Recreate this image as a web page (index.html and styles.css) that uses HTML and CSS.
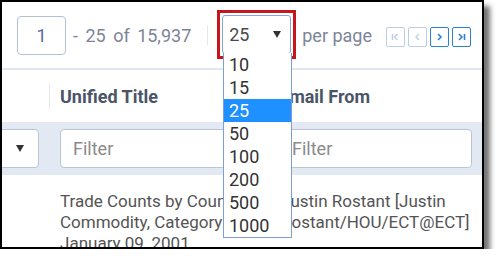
FILE: index.html
```html
<!DOCTYPE html>
<html lang="en">
<head>
  <meta charset="UTF-8" />
  <meta name="viewport" content="width=device-width, initial-scale=1.0" />
  <title>Documents grid</title>
  <link rel="stylesheet" href="styles.css">
</head>
<body>
  <div class="frame">
    <div class="toolbar">
      <div class="page-input">1</div>
      <div class="range">- 25 of 15,937</div>
      <div class="divider"></div>
      <div class="size-wrap">
        <div class="size-select">
          <span>25</span>
          <svg width="8" height="7" viewBox="0 0 8 7"><path d="M0 0 H8 L4 7 Z" fill="#333"/></svg>
        </div>
      </div>
      <div class="per-page">per page</div>
      <div class="pager">
        <button class="pg off">
          <svg width="19" height="20" viewBox="0 0 19 20"><path d="M6.5 7 V13 M11.5 7 L8.5 10 L11.5 13" fill="none" stroke="currentColor" stroke-width="1.4"/></svg>
        </button>
        <button class="pg off">
          <svg width="19" height="20" viewBox="0 0 19 20"><path d="M11 7 L8 10 L11 13" fill="none" stroke="currentColor" stroke-width="1.4"/></svg>
        </button>
        <button class="pg">
          <svg width="19" height="20" viewBox="0 0 19 20"><path d="M8 7 L11 10 L8 13" fill="none" stroke="currentColor" stroke-width="1.6"/></svg>
        </button>
        <button class="pg">
          <svg width="19" height="20" viewBox="0 0 19 20"><path d="M7 7 L10 10 L7 13 M12.5 7 V13" fill="none" stroke="currentColor" stroke-width="1.6"/></svg>
        </button>
      </div>
    </div>

    <div class="head-row">
      <div class="th col1"></div>
      <div class="th col2">Unified Title</div>
      <div class="th col3">Email From</div>
    </div>

    <div class="filter-row">
      <div class="col1">
        <div class="filter-select">
          <svg width="8" height="7" viewBox="0 0 8 7"><path d="M0 0 H8 L4 7 Z" fill="#333"/></svg>
        </div>
      </div>
      <div class="col2"><div class="filter-input">Filter</div></div>
      <div class="col3"><div class="filter-input">Filter</div></div>
    </div>

    <div class="data-row">
      <div class="col1"></div>
      <div class="td col2">Trade Counts by Counterparty,<br>Commodity, Category<br>January 09, 2001</div>
      <div class="td col3">Justin Rostant [Justin Rostant/HOU/ECT@ECT]</div>
    </div>

    <ul class="size-list">
      <li>10</li>
      <li>15</li>
      <li class="active">25</li>
      <li>50</li>
      <li>100</li>
      <li>200</li>
      <li>500</li>
      <li>1000</li>
    </ul>
  </div>
</body>
</html>
```

FILE: styles.css
```css
body {
  margin: 0;
  background-color: #fff;
  font-family: Roboto, "Liberation Sans", sans-serif;
}

.frame {
  position: relative;
  width: 484px;
  height: 249px;
  box-sizing: border-box;
  border: 2px solid #000;
  background-color: #fff;
  overflow: hidden;
  box-shadow: 6px 6px 5px rgba(0, 0, 0, 0.55);
}

/* top paging bar */
.toolbar {
  display: flex;
  align-items: center;
  height: 66px;
  padding: 0 11px 0 15px;
  border-bottom: 2px solid #dfe7f1;
}

.page-input {
  width: 49px;
  height: 39px;
  box-sizing: border-box;
  border: 1px solid #b3c0d6;
  border-radius: 4px;
  text-align: center;
  line-height: 37px;
  font-size: 18px;
  color: #5a6d9c;
}

.range {
  margin-left: 7px;
  font-size: 18px;
  word-spacing: 3px;
  color: #7d8597;
}

.divider {
  width: 1px;
  height: 20px;
  background-color: #e4e7eb;
  margin: 0 9px 0 16px;
}

.size-wrap {
  padding: 2px;
  border: 3px solid #c4161c;
  margin-top: -2px;
}

.size-select {
  display: flex;
  align-items: center;
  justify-content: space-between;
  width: 69px;
  height: 39px;
  box-sizing: border-box;
  padding: 0 9px 0 6px;
  border: 1px solid #86a6e0;
  border-radius: 3px;
  font-size: 18px;
  color: #4a4a4a;
}

.per-page {
  margin-left: 6px;
  font-size: 18px;
  color: #7d8597;
}

.pager {
  display: flex;
  gap: 3px;
  margin-left: auto;
  margin-top: 4px;
}

.pg {
  width: 19px;
  height: 20px;
  padding: 0;
  border: 1px solid #2d80d8;
  border-radius: 2px;
  background: #fff;
  color: #2d80d8;
  display: flex;
  align-items: center;
  justify-content: center;
}

.pg svg {
  display: block;
  margin: -1px;
}

.pg.off {
  border-color: #bccde5;
  color: #bccde5;
}

/* grid columns */
.col1 {
  width: 47px;
  flex: none;
}

.col2 {
  width: 219px;
  flex: none;
}

.col3 {
  flex: 1;
}

.head-row {
  display: flex;
  align-items: center;
  height: 52px;
}

.th {
  height: 25px;
  line-height: 25px;
  font-size: 18px;
  font-weight: bold;
  color: #4a5567;
  white-space: nowrap;
}

.th.col2,
.th.col3 {
  border-left: 1px solid #e4e7eb;
  padding-left: 10px;
  box-sizing: border-box;
}

.filter-row {
  display: flex;
  align-items: center;
  height: 53px;
  background-color: #e2e9f3;
}

.filter-select {
  display: flex;
  align-items: center;
  justify-content: flex-end;
  width: 60px;
  height: 39px;
  box-sizing: border-box;
  margin-left: -23px;
  padding-right: 14px;
  border: 1px solid #b9c5d7;
  border-radius: 4px;
  background-color: #fff;
}

.filter-input {
  height: 39px;
  box-sizing: border-box;
  margin: 0 10px 0 11px;
  padding-left: 12px;
  border: 1px solid #b9c5d7;
  border-radius: 4px;
  background-color: #fff;
  line-height: 37px;
  font-size: 18px;
  color: #8a8a8a;
}

.data-row {
  display: flex;
  padding-top: 16px;
}

.td {
  font-size: 17px;
  line-height: 21px;
  color: #545454;
}

.td.col2 {
  padding-left: 11px;
  box-sizing: border-box;
  white-space: nowrap;
}

.td.col3 {
  padding-left: 13px;
}

/* open page-size list */
.size-list {
  position: absolute;
  left: 221px;
  top: 51px;
  width: 69px;
  margin: 0;
  padding: 0;
  list-style: none;
  box-sizing: border-box;
  border: 1px solid #7f9fd3;
  border-top: none;
  background-color: #fff;
}

.size-list li {
  height: 23px;
  line-height: 23px;
  padding-left: 5px;
  font-size: 18px;
  color: #333;
}

.size-list li.active {
  background-color: #1e90ff;
  color: #fff;
}
```
